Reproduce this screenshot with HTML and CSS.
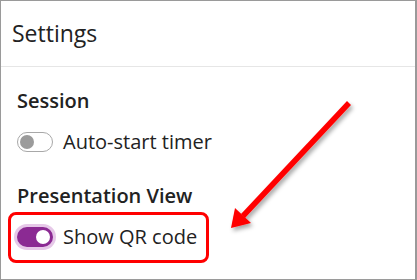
FILE: index.html
```html
<!DOCTYPE html>
<html lang="en">
<head>
    <meta charset="UTF-8">
    <title>Settings</title>
    <link rel="stylesheet" href="styles.css">
</head>
<body>
    <div class="panel">
        <div class="panel-header">
            <h1>Settings</h1>
        </div>

        <div class="panel-body">
            <div class="group">
                <h2>Session</h2>
                <label class="option">
                    <span class="toggle"><span class="knob"></span></span>
                    Auto-start timer
                </label>
            </div>

            <div class="group">
                <h2>Presentation View</h2>
                <label class="option highlight">
                    <span class="toggle on"><span class="knob"></span></span>
                    Show QR code
                </label>
            </div>
        </div>

        <!-- annotation arrow -->
        <svg class="arrow" width="417" height="280" viewBox="0 0 417 280">
            <defs>
                <filter id="shadow" x="-20%" y="-20%" width="140%" height="140%">
                    <feDropShadow dx="2" dy="3" stdDeviation="2" flood-color="#000" flood-opacity="0.35"/>
                </filter>
            </defs>
            <g filter="url(#shadow)" fill="#ff0000">
                <line x1="349" y1="103" x2="243" y2="216" stroke="#ff0000" stroke-width="5.5" stroke-linecap="butt"/>
                <polygon points="231,228 235,208 251,223"/>
            </g>
        </svg>
    </div>
</body>
</html>
```

FILE: styles.css
```css
body {
    margin: 0;
    padding: 0;
    background-color: #fff;
    font-family: 'Open Sans', 'Noto Sans', sans-serif;
    color: #222;
}

.panel {
    position: relative;
    box-sizing: border-box;
    width: 417px;
    height: 280px;
    border: 1px solid #9a9a9a;
    border-right-width: 2px;
    overflow: hidden;
}

.panel-header {
    height: 47px;
    padding: 18px 0 0 11px;
    border-bottom: 1px solid #e6e6e6;
}

h1 {
    margin: 0;
    font-size: 23px;
    line-height: 28px;
    font-weight: 400;
    color: #222;
}

.panel-body {
    padding: 22px 0 0 16px;
}

.group {
    margin-bottom: 30px;
}

h2 {
    margin: 0 0 17px;
    font-size: 20px;
    line-height: 24px;
    font-weight: 600;
    color: #222;
}

.option {
    display: flex;
    align-items: center;
    gap: 10px;
    font-size: 20px;
    line-height: 24px;
    color: #222;
}

.toggle {
    box-sizing: border-box;
    width: 36px;
    height: 20px;
    border: 1px solid #a8a8a8;
    border-radius: 10px;
    padding: 2px;
    display: flex;
    align-items: center;
}

.knob {
    width: 14px;
    height: 14px;
    border-radius: 50%;
    background-color: #9b9b9b;
}

.toggle.on {
    border: none;
    background-color: #8b2a93;
    box-shadow: 0 0 0 3px #e6c8e8;
    justify-content: flex-end;
    padding: 3px;
}

.toggle.on .knob {
    background-color: #fff;
}

.highlight {
    box-sizing: border-box;
    width: 201px;
    margin: -13px 0 0 -9px;
    padding: 10px 6px 11px 6px;
    border: 3px solid #ff0000;
    border-radius: 8px;
}

.arrow {
    position: absolute;
    left: -1px;
    top: -1px;
}
```
